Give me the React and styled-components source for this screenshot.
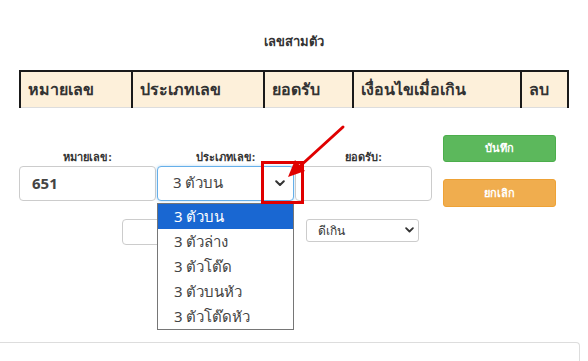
import React from "react";
import styled, { createGlobalStyle } from "styled-components";

const Global = createGlobalStyle`
  html, body { margin: 0; padding: 0; background: #fff; }
  body { font-family: Tahoma, "Noto Sans", "DejaVu Sans", sans-serif; color: #333; }
  * { box-sizing: border-box; }
`;

const Page = styled.div`
  position: relative;
  width: 588px;
  height: 361px;
  overflow: hidden;
`;

const Title = styled.div`
  padding-top: 33px;
  height: 70px;
  text-align: center;
  font-size: 13px;
  line-height: 16px;
  font-weight: bold;
  color: #333;
`;

const Table = styled.table`
  margin-left: 19px;
  width: 548px;
  border-collapse: collapse;
  table-layout: fixed;
`;

const Th = styled.th`
  width: ${(p) => p.w}px;
  height: 36px;
  padding: 0 0 0 7px;
  text-align: left;
  background: #fdf0da;
  border: 2px solid #1a1a1a;
  border-bottom: 1px solid #ddd;
  font-size: 16px;
  font-weight: bold;
  color: #333;
`;

const FormArea = styled.div`
  display: flex;
  align-items: flex-start;
  margin-top: 27px;
  padding-left: 19px;
`;

const Fields = styled.div`
  display: flex;
  gap: 1px;
  padding-top: 13px;
`;

const Field = styled.div`
  position: relative;
  display: flex;
  flex-direction: column;
  width: 137px;
`;

const Label = styled.div`
  height: 18px;
  line-height: 17px;
  text-align: center;
  font-size: 11px;
  font-weight: bold;
  color: #333;
`;

const TextBox = styled.div`
  height: 35px;
  border: 1px solid #ccc;
  border-radius: 4px;
  padding-left: 12px;
  display: flex;
  align-items: center;
  font-size: 15px;
  font-weight: bold;
  color: #444;
  background: #fff;
`;

const SelectBox = styled.div`
  height: 35px;
  border: 1px solid #66afe9;
  border-radius: 4px;
  box-shadow: 0 0 3px rgba(102, 175, 233, 0.5);
  padding: 0 8px 0 15px;
  display: flex;
  align-items: center;
  justify-content: space-between;
  font-size: 15px;
  color: #444;
  background: #fff;
`;

const Chevron = ({ size = 10 }) => (
  <svg width={size} height={size * 0.65} viewBox="0 0 10 6.5">
    <path d="M1.2 1.2 L5 5 L8.8 1.2" fill="none" stroke="#333" strokeWidth="2" strokeLinecap="round" strokeLinejoin="round" />
  </svg>
);

const DropList = styled.div`
  position: absolute;
  top: 55px;
  left: 0;
  width: 137px;
  border: 1px solid #767676;
  background: #fff;
  z-index: 5;
`;

const Option = styled.div`
  height: 25px;
  line-height: 25px;
  padding-left: 16px;
  font-size: 15px;
  color: ${(p) => (p.selected ? "#fff" : "#444")};
  background: ${(p) => (p.selected ? "#1967d2" : "#fff")};
`;

const RedBox = styled.div`
  position: absolute;
  left: 104px;
  top: 13px;
  width: 43px;
  height: 43px;
  border: 3px solid #e00000;
  z-index: 6;
`;

const Buttons = styled.div`
  display: flex;
  flex-direction: column;
  gap: 17px;
  margin-left: 11px;
`;

const Button = styled.div`
  width: 113px;
  height: ${(p) => p.h}px;
  border-radius: 3px;
  background: ${(p) => p.bg};
  border: 1px solid ${(p) => p.bd};
  color: #fff;
  font-size: 11px;
  font-weight: bold;
  display: flex;
  align-items: center;
  justify-content: center;
`;

const SecondRow = styled.div`
  display: flex;
  align-items: flex-start;
  margin-top: 12px;
  padding-left: 122px;
`;

const SmallInput = styled.div`
  width: 137px;
  height: 26px;
  border: 1px solid #ccc;
  border-radius: 4px;
`;

const SmallSelect = styled.div`
  margin-left: 47px;
  width: 113px;
  height: 23px;
  border: 1px solid #ccc;
  border-radius: 3px;
  padding: 0 4px 0 11px;
  display: flex;
  align-items: center;
  justify-content: space-between;
  font-size: 12px;
  color: #333;
`;

const BottomPanel = styled.div`
  margin-top: 97px;
  width: 580px;
  height: 40px;
  border: 1px solid #ddd;
  border-left: none;
  border-bottom: none;
  border-top-right-radius: 4px;
`;

const ArrowSvg = styled.svg`
  position: absolute;
  left: 280px;
  top: 120px;
  z-index: 7;
`;

const options = ["3 ตัวบน", "3 ตัวล่าง", "3 ตัวโต๊ด", "3 ตัวบนหัว", "3 ตัวโต๊ดหัว"];

export default function App() {
  return (
    <Page>
      <Global />
      <Title>เลขสามตัว</Title>
      <Table>
        <thead>
          <tr>
            <Th w={112}>หมายเลข</Th>
            <Th w={132}>ประเภทเลข</Th>
            <Th w={89}>ยอดรับ</Th>
            <Th w={168}>เงื่อนไขเมื่อเกิน</Th>
            <Th w={47}>ลบ</Th>
          </tr>
        </thead>
      </Table>
      <FormArea>
        <Fields>
          <Field>
            <Label>หมายเลข:</Label>
            <TextBox>651</TextBox>
          </Field>
          <Field>
            <Label>ประเภทเลข:</Label>
            <SelectBox>
              <span>3 ตัวบน</span>
              <Chevron />
            </SelectBox>
            <RedBox />
            <DropList>
              {options.map((o, i) => (
                <Option key={o} selected={i === 0}>{o}</Option>
              ))}
            </DropList>
          </Field>
          <Field>
            <Label>ยอดรับ:</Label>
            <TextBox />
          </Field>
        </Fields>
        <Buttons>
          <Button h={27} bg="#5cb85c" bd="#4cae4c">บันทึก</Button>
          <Button h={28} bg="#f0ad4e" bd="#eea236">ยกเลิก</Button>
        </Buttons>
      </FormArea>
      <SecondRow>
        <SmallInput />
        <SmallSelect>
          <span>ดีเกิน</span>
          <Chevron size={9} />
        </SmallSelect>
      </SecondRow>
      <BottomPanel />
      <ArrowSvg width="80" height="70" viewBox="0 0 80 70">
        <line x1="63" y1="7" x2="18" y2="48" stroke="#e00000" strokeWidth="3" strokeLinecap="round" />
        <polygon points="8,57 15,40 25,51" fill="#e00000" />
      </ArrowSvg>
    </Page>
  );
}
